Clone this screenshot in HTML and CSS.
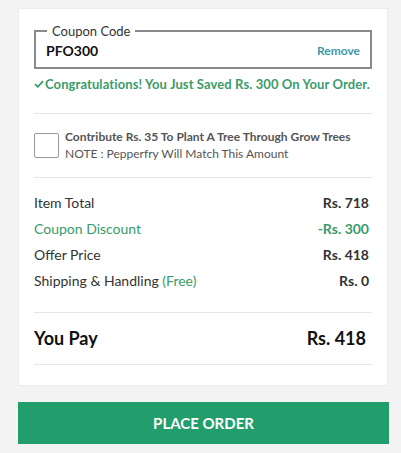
FILE: index.html
```html
<!DOCTYPE html>
<html lang="en">
<head>
    <meta charset="UTF-8">
    <meta name="viewport" content="width=device-width, initial-scale=1.0">
    <title>Order Summary</title>
    <link rel="stylesheet" href="styles.css">
</head>
<body>
    <main class="summary">
        <section class="card">
            <div class="coupon">
                <fieldset class="coupon-box">
                    <legend>Coupon Code</legend>
                    <div class="coupon-row">
                        <span class="coupon-code">PFO300</span>
                        <a class="remove" href="#">Remove</a>
                    </div>
                </fieldset>
                <p class="coupon-msg">
                    <svg class="tick" width="10" height="8" viewBox="0 0 10 8"><polyline points="1,4.2 3.8,6.8 9,1.2" fill="none" stroke="#3a9b6b" stroke-width="1.8"/></svg>
                    <span>Congratulations! You Just Saved Rs. 300 On Your Order.</span>
                </p>
            </div>

            <div class="donate">
                <span class="check-box"></span>
                <div class="donate-text">
                    <p class="donate-title">Contribute Rs. 35 To Plant A Tree Through Grow Trees</p>
                    <p class="donate-note">NOTE : Pepperfry Will Match This Amount</p>
                </div>
            </div>

            <div class="totals">
                <div class="row">
                    <span>Item Total</span>
                    <span class="amount">Rs. 718</span>
                </div>
                <div class="row green">
                    <span>Coupon Discount</span>
                    <span class="amount">-Rs. 300</span>
                </div>
                <div class="row">
                    <span>Offer Price</span>
                    <span class="amount">Rs. 418</span>
                </div>
                <div class="row">
                    <span>Shipping &amp; Handling <span class="free">(Free)</span></span>
                    <span class="amount">Rs. 0</span>
                </div>
            </div>

            <div class="pay">
                <span>You Pay</span>
                <span>Rs. 418</span>
            </div>
        </section>

        <button class="place-order">PLACE ORDER</button>
    </main>
</body>
</html>
```

FILE: styles.css
```css
body {
    margin: 0;
    background-color: #f3f3f3;
    font-family: 'Lato', 'Open Sans', sans-serif;
    color: #333;
}

p {
    margin: 0;
}

.summary {
    width: 371px;
    padding: 8px 0 0 18px;
}

.card {
    width: 370px;
    box-sizing: border-box;
    background: #fff;
    border: 1px solid #ebebeb;
    padding: 14px 15px 20px 15px;
}

.coupon {
    padding-bottom: 21px;
    border-bottom: 1px solid #e6e6e6;
}

.coupon-box {
    margin: 0;
    border: 2px solid #8a8a8a;
    padding: 0 10px 6px 10px;
}

.coupon-box legend {
    margin-left: 1px;
    padding: 0 5px;
    font-size: 13px;
    line-height: 16px;
    color: #333;
}

.coupon-row {
    display: flex;
    justify-content: space-between;
    align-items: center;
    height: 22px;
}

.coupon-code {
    font-size: 14px;
    font-weight: bold;
    color: #111;
}

.remove {
    font-size: 12px;
    font-weight: bold;
    color: #3d9aab;
    text-decoration: none;
}

.coupon-msg {
    margin-top: 7px;
    font-size: 13px;
    line-height: 16px;
    font-weight: bold;
    color: #3a9b6b;
    display: flex;
    align-items: center;
    gap: 1px;
    white-space: nowrap;
    letter-spacing: 0.1px;
}

.donate {
    display: flex;
    gap: 6px;
    padding: 19px 0 15px 0;
    border-bottom: 1px solid #e6e6e6;
}

.check-box {
    width: 23px;
    height: 23px;
    border: 1px solid #999;
    border-radius: 2px;
    flex-shrink: 0;
}

.donate-text {
    font-size: 12px;
    line-height: 17px;
    color: #555;
    margin-top: -5px;
}

.donate-title {
    font-weight: bold;
}

.totals {
    padding: 12px 3px 18px 0;
    border-bottom: 1px solid #e6e6e6;
}

.row {
    display: flex;
    justify-content: space-between;
    font-size: 14px;
    line-height: 26px;
}

.amount {
    font-weight: bold;
}

.green,
.free {
    color: #3a9b6b;
}

.pay {
    display: flex;
    justify-content: space-between;
    padding: 13px 6px 14px 0;
    font-size: 18px;
    line-height: 24px;
    font-weight: bold;
    color: #111;
    border-bottom: 1px solid #e6e6e6;
}

.place-order {
    display: block;
    width: 371px;
    height: 42px;
    margin-top: 16px;
    border: none;
    background-color: #229d6c;
    color: #fff;
    font-family: 'Lato', sans-serif;
    font-size: 15px;
    font-weight: bold;
    cursor: pointer;
}
```
